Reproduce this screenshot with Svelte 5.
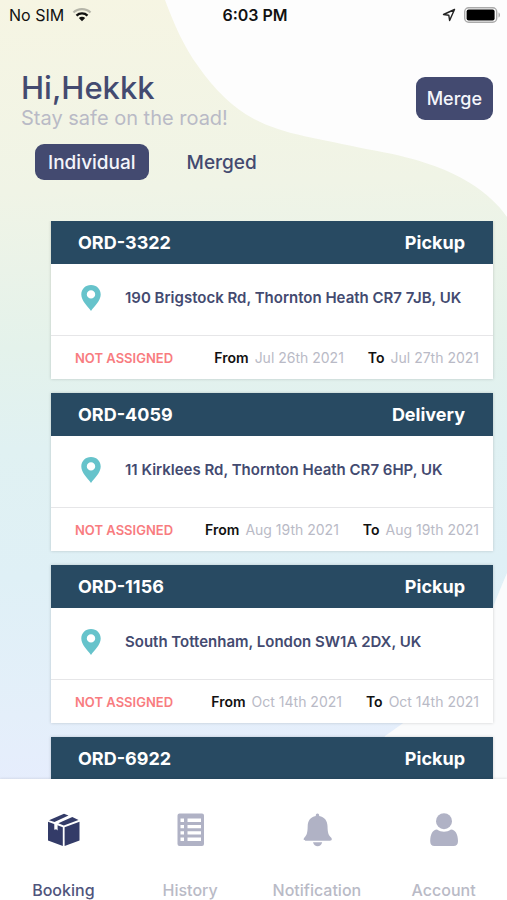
<script>
  const orders = [
    { id: 'ORD-3322', type: 'Pickup', address: '190 Brigstock Rd, Thornton Heath CR7 7JB, UK', status: 'NOT ASSIGNED', from: 'Jul 26th 2021', to: 'Jul 27th 2021' },
    { id: 'ORD-4059', type: 'Delivery', address: '11 Kirklees Rd, Thornton Heath CR7 6HP, UK', status: 'NOT ASSIGNED', from: 'Aug 19th 2021', to: 'Aug 19th 2021' },
    { id: 'ORD-1156', type: 'Pickup', address: 'South Tottenham, London SW1A 2DX, UK', status: 'NOT ASSIGNED', from: 'Oct 14th 2021', to: 'Oct 14th 2021' },
    { id: 'ORD-6922', type: 'Pickup' }
  ];

  const filters = ['Individual', 'Merged'];
  const pages = ['Booking', 'History', 'Notification', 'Account'];

  let filter = $state('Individual');
  let page = $state('Booking');
</script>

<div class="screen">
  <!-- background blobs -->
  <svg class="backdrop" viewBox="0 0 507 900" preserveAspectRatio="none" aria-hidden="true">
    <path fill="#fdfdfd" d="M165 0 C174 24 184 47 198 66 C214 89 233 108 254 119 C284 135 322 139 366 149 C414 157 446 168 470 183 C486 193 498 204 507 217 V0 Z" />
    <path fill="#fafbfc" d="M507 573 C497 596 488 622 474 650 C456 684 420 712 385 736 L340 900 H507 Z" />
  </svg>

  <div class="status-bar">
    <span class="carrier">
      No SIM
      <svg width="20" height="14" viewBox="0 0 20 14" fill="none" aria-hidden="true">
        <path d="M1.5 4.5 C6 0 14 0 18.500 4.500" stroke="#b5b5a9" stroke-width="2.200" />
        <path d="M4.500 7.600 C7.500 4.700 12.500 4.700 15.500 7.600" stroke="#111" stroke-width="2.300" />
        <path d="M6.800 10 C8.600 8.300 11.400 8.300 13.200 10 L10 13.200 Z" fill="#111" />
      </svg>
    </span>
    <span class="clock">6:03 PM</span>
    <span class="indicators">
      <svg width="14" height="14" viewBox="0 0 14 14" aria-hidden="true">
        <path d="M12.500 1.500 L1.500 6.500 L6.800 7.200 L7.600 12.500 Z" fill="none" stroke="#222" stroke-width="1.400" stroke-linejoin="round" />
      </svg>
      <svg width="37" height="16" viewBox="0 0 37 16" aria-hidden="true">
        <rect x="0.700" y="0.700" width="32" height="14.600" rx="4" fill="none" stroke="#aaa" stroke-width="1.400" />
        <rect x="2.600" y="2.600" width="28" height="10.800" rx="2" fill="#000" />
        <path d="M34.500 5.500 C36.500 6 36.500 10 34.500 10.500 Z" fill="#aaa" />
      </svg>
    </span>
  </div>

  <header>
    <div>
      <h1>Hi,Hekkk</h1>
      <p>Stay safe on the road!</p>
    </div>
    <button class="btn merge">Merge</button>
  </header>

  <div class="filters">
    {#each filters as name}
      <button class="btn" class:plain={filter !== name} onclick={() => (filter = name)}>{name}</button>
    {/each}
  </div>

  <main>
    {#each orders as order}
      <article>
        <div class="card-head">
          <h2>{order.id}</h2>
          <span>{order.type}</span>
        </div>
        {#if order.address}
          <div class="card-body">
            <svg width="20" height="26" viewBox="0 0 20 26" aria-hidden="true">
              <path fill="#66c3cb" fill-rule="evenodd" d="M10 0 C4.300 0 0.300 4.200 0.300 9.500 C0.300 16 6.500 21 10 26 C13.500 21 19.700 16 19.700 9.500 C19.700 4.200 15.700 0 10 0 Z M10 5.200 A4.200 4.200 0 1 1 10 13.600 A4.200 4.200 0 1 1 10 5.200 Z" />
            </svg>
            <span>{order.address}</span>
          </div>
          <div class="card-foot">
            <span class="state">{order.status}</span>
            <span class="date"><b>From</b>{order.from}</span>
            <span class="date"><b>To</b>{order.to}</span>
          </div>
        {/if}
      </article>
    {/each}
  </main>

  <nav>
    {#each pages as name}
      <button class="tab" class:active={page === name} onclick={() => (page = name)}>
        <svg width="34" height="34" viewBox="0 0 34 34" fill="currentColor" aria-hidden="true">
          {#if name === 'Booking'}
            <path d="M2 8.800 L16.800 14.200 V33 L2 27.500 Z" />
            <path d="M18.600 14.200 L33.500 8.800 V27.500 L18.600 33 Z" />
            <path d="M3 7.200 L18 0.800 L22.500 2.500 L8.500 9 Z" />
            <path d="M12.300 10.300 L26.300 4 L32.500 7 L17.800 12.600 Z" />
            <path d="M8.300 10 L11.600 11.200 V17.500 L10.200 16.300 L8.300 16.800 Z" fill="#fff" />
          {:else if name === 'History'}
            <path fill-rule="evenodd" d="M6.500 0.500 H29 Q31 0.500 31 2.500 V31 Q31 33 29 33 H6.500 Q4.500 33 4.500 31 V2.500 Q4.500 0.500 6.500 0.500 Z M7.500 5.500 V9 H11 V5.500 Z M14.500 5.500 V9 H28 V5.500 Z M7.500 12 V15.300 H11 V12 Z M14.500 12 V15.300 H28 V12 Z M7.500 18.300 V21.600 H11 V18.300 Z M14.500 18.300 V21.600 H28 V18.300 Z M7.500 24.600 V28 H11 V24.600 Z M14.500 24.600 V28 H28 V24.600 Z" />
          {:else if name === 'Notification'}
            <path d="M17.500 0.500 C18.800 0.500 19.300 1.500 19.200 3 C24.500 4 27.300 7.600 27.500 13 C27.700 19.500 28.200 22 31 24.500 C32.500 26 31.800 27.700 30 27.700 H5.500 C3.700 27.700 3 26 4.500 24.500 C7 22 7.500 19.500 7.700 13 C7.900 7.600 10.500 4 15.800 3 C15.700 1.500 16.200 0.500 17.500 0.500 Z" />
            <path d="M13 29.200 H22.200 C21.500 32 19.800 33.300 17.600 33.300 C15.400 33.300 13.700 32 13 29.200 Z" />
          {:else}
            <circle cx="17" cy="8.200" r="8" />
            <path d="M10 16.500 C14.500 19.500 19.500 19.500 24 16.500 C28.500 17 30.800 21 31 28 C31 31.200 29.500 33 26.500 33 H7.500 C4.500 33 3.200 31.200 3.200 28 C3.400 21 5.500 17 10 16.500 Z" />
          {/if}
        </svg>
        {name}
      </button>
    {/each}
  </nav>
</div>

<style>
  :global(body) {
    margin: 0;
  }

  .screen {
    position: relative;
    display: flex;
    flex-direction: column;
    height: 100vh;
    overflow: hidden;
    font-family: Inter, "Liberation Sans", sans-serif;
    color: #434a70;
    background: linear-gradient(178deg, #f6f5e3 0%, #f0f4e6 21%, #e4f2eb 38%, #e0f1f2 49%, #dff0f6 63%, #e4effa 78%, #e6edfd 86%);
  }

  .backdrop {
    position: absolute;
    inset: 0;
    width: 100%;
    height: 100%;
  }

  .status-bar, header, .filters, main, nav {
    position: relative;
  }

  .status-bar {
    display: grid;
    grid-template-columns: 1fr auto 1fr;
    align-items: center;
    height: 30px;
    padding: 0 6px 0 9px;
    font-size: 16px;
    color: #111;
  }
  .carrier, .indicators { display: flex; align-items: center; gap: 8px; }
  .indicators { justify-content: flex-end; }
  .clock { font-weight: 600; }

  header {
    display: flex;
    justify-content: space-between;
    align-items: center;
    padding: 40px 14px 0 21px;
  }
  h1 {
    margin: 0;
    font-size: 31px;
    line-height: 36px;
    font-weight: 500;
  }
  header p {
    margin: 0;
    font-size: 20px;
    line-height: 24px;
    color: #b9bac6;
  }

  .btn {
    height: 36px;
    padding: 0 13px;
    border: none;
    border-radius: 9px;
    font-family: inherit;
    font-size: 19px;
    font-weight: 500;
    color: #f4f5fb;
    background: #434a70;
    cursor: pointer;
  }
  .btn.plain { color: #434a70; background: transparent; }
  .btn.merge { height: 43px; padding: 0 11px; margin-bottom: 4px; font-size: 18px; }

  .filters {
    display: flex;
    gap: 25px;
    padding: 14px 35px 0;
  }

  main {
    flex: 1;
    min-height: 0;
    display: flex;
    flex-direction: column;
    gap: 14px;
    margin-top: 41px;
    padding: 0 14px 0 51px;
    overflow: hidden;
  }

  article {
    flex: none;
    background: #fff;
    box-shadow: 0 0 3px rgba(0, 0, 0, 0.18);
  }
  .card-head {
    display: flex;
    justify-content: space-between;
    align-items: center;
    height: 43px;
    padding: 0 28px 0 27px;
    font-size: 18px;
    font-weight: 700;
    color: #fff;
    background: #284a62;
  }
  .card-head h2 { margin: 0; font-size: 18px; font-weight: 700; }
  .card-body {
    display: flex;
    align-items: center;
    gap: 24px;
    height: 67px;
    padding: 0 14px 4px 30px;
    font-size: 15px;
    font-weight: 600;
    white-space: nowrap;
    border-bottom: 1px solid #e6e6e8;
  }
  .card-body svg { flex: none; }
  .card-foot {
    display: flex;
    align-items: center;
    height: 43px;
    padding: 0 14px 0 24px;
    font-size: 14px;
    gap: 24px;
    color: #b9bac6;
  }
  .state { margin-right: auto; font-size: 13px; font-weight: 600; color: #f87c80; }
  .date b { margin-right: 6px; font-weight: 600; color: #111; }

  nav {
    display: flex;
    height: 121px;
    background: #fff;
    box-shadow: 0 -1px 2px rgba(0, 0, 0, 0.08);
  }
  .tab {
    flex: 1;
    display: flex;
    flex-direction: column;
    align-items: center;
    gap: 33px;
    padding: 34px 0 0;
    border: none;
    background: none;
    font-family: inherit;
    font-size: 16px;
    line-height: 20px;
    font-weight: 500;
    color: #b9bac6;
    cursor: pointer;
  }
  .tab svg { flex: none; color: #b0b2c5; }
  .tab.active { color: #50557c; }
  .tab.active svg { color: #333b68; }
</style>
